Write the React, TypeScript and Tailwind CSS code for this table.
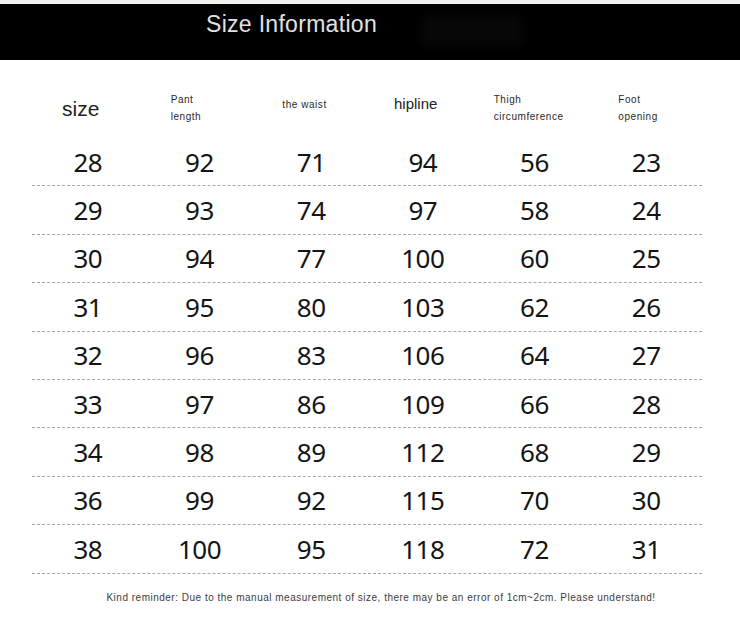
import React from 'react';

const rows = [
  ['28', '92', '71', '94', '56', '23'],
  ['29', '93', '74', '97', '58', '24'],
  ['30', '94', '77', '100', '60', '25'],
  ['31', '95', '80', '103', '62', '26'],
  ['32', '96', '83', '106', '64', '27'],
  ['33', '97', '86', '109', '66', '28'],
  ['34', '98', '89', '112', '68', '29'],
  ['36', '99', '92', '115', '70', '30'],
  ['38', '100', '95', '118', '72', '31'],
];

const small = 'text-[10px] leading-[17px] tracking-[0.55px] text-[#2a2a2a]';

export default function App() {
  return (
    <div className="w-[740px] h-[618px] bg-white overflow-hidden font-['Liberation_Sans',Arial,sans-serif]">
      <div className="h-[4px] bg-[#f1f1f1]" />
      <div className="h-[56px] bg-black flex items-start">
        <div className="pl-[206px] pt-[7px] text-[23px] leading-[26px] tracking-[0.3px] text-[#e2e2e2]">Size Information</div>
        <div className="ml-[45px] mt-[12px] w-[100px] h-[30px] bg-[#070707] blur-[4px]" />
      </div>

      <div className="ml-[32px] w-[670px]">
        {/* column labels */}
        <div className="grid grid-cols-6 h-[78px] items-center">
          <div className="pl-[30px] pt-[20px] text-[21px] leading-[24px] text-[#222]">size</div>
          <div className={`pl-[27px] pt-[17px] ${small}`}>
            Pant
            <br />
            length
          </div>
          <div className={`pl-[27px] pt-[10px] ${small}`}>the waist</div>
          <div className="pl-[27px] pt-[10px] text-[15px] leading-[18px] text-[#222]">hipline</div>
          <div className={`pl-[15px] pt-[18px] ${small}`}>
            Thigh
            <br />
            circumference
          </div>
          <div className={`pl-[28px] pt-[18px] ${small}`}>
            Foot
            <br />
            opening
          </div>
        </div>

        {/* values */}
        {rows.map((r) => (
          <div
            key={r[0]}
            className="grid grid-cols-6 h-[48.4px] items-center border-b border-dashed border-[#a8a8a8]"
          >
            {r.map((v, i) => (
              <div
                key={i}
                className="text-center font-['Noto_Sans',sans-serif] text-[26px] leading-[30px] tracking-[-0.5px] text-[#141414]"
              >
                {v}
              </div>
            ))}
          </div>
        ))}
      </div>

      <p className="mt-[17px] pl-[22px] text-center text-[10px] leading-[14px] tracking-[0.5px] text-[#3c3c3c]">
        Kind reminder: Due to the manual measurement of size, there may be an error of 1cm~2cm. Please understand!
      </p>
    </div>
  );
}
